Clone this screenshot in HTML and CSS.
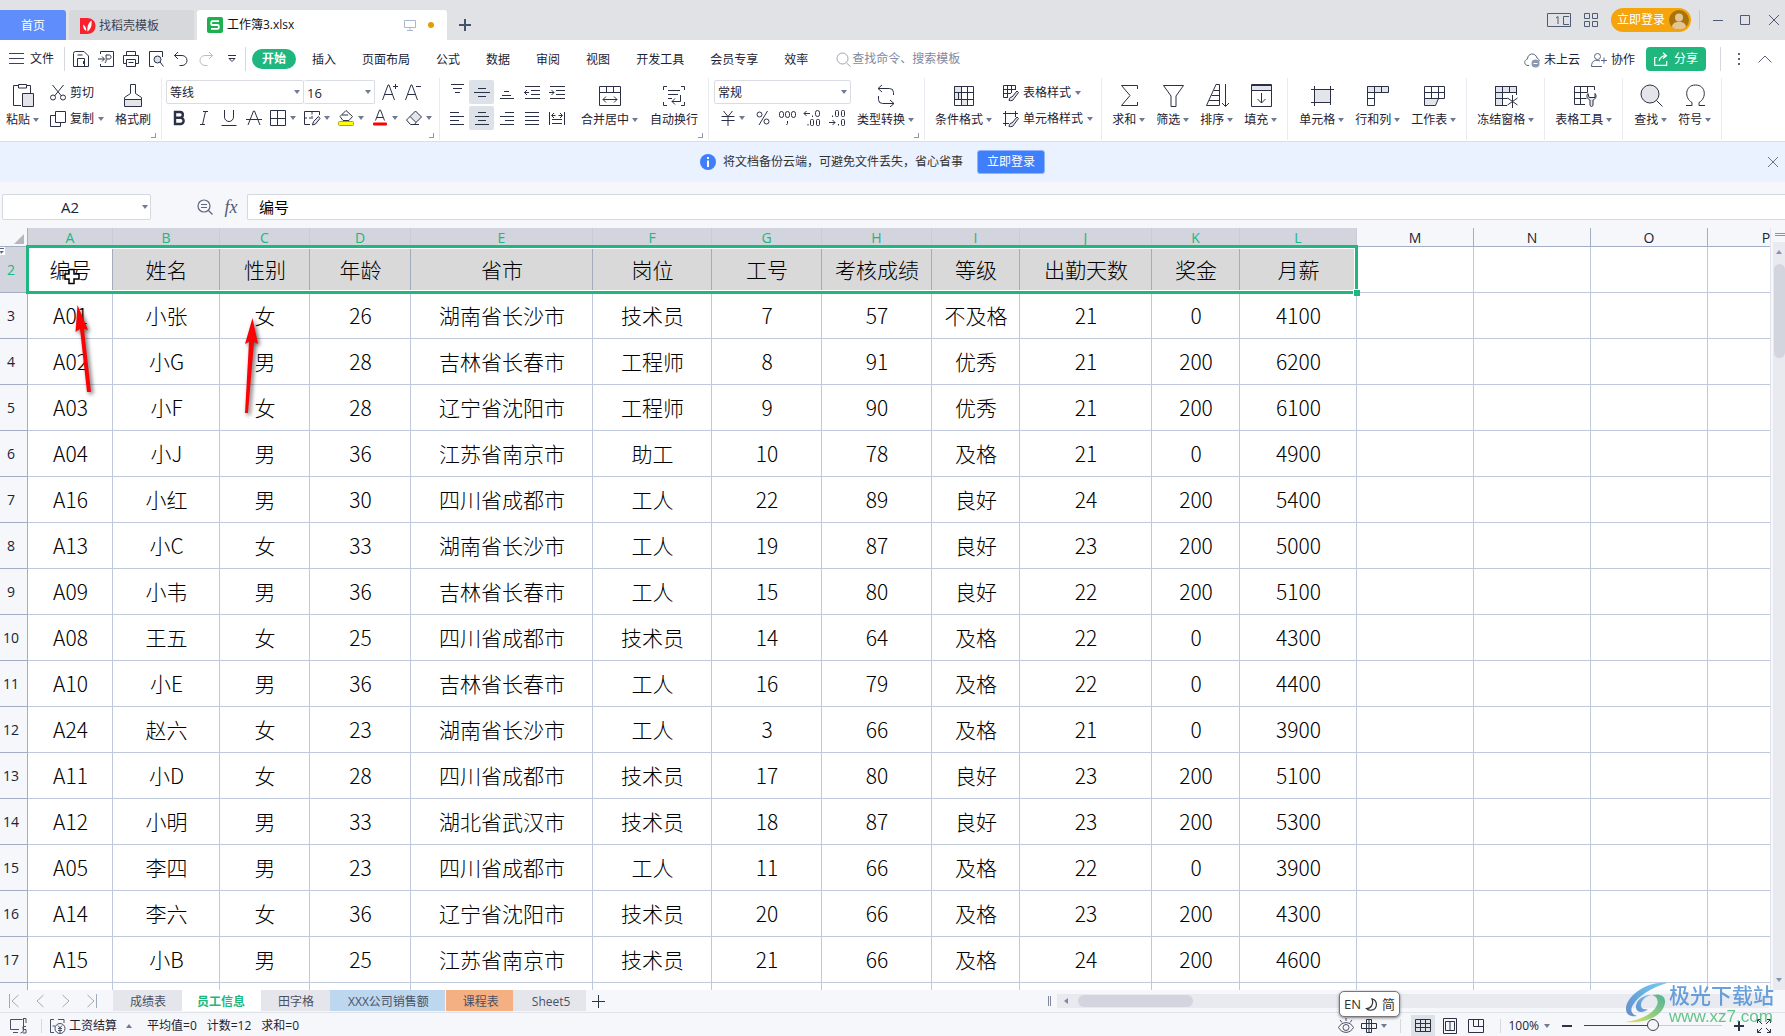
FILE: index.html
```html
<!DOCTYPE html>
<html lang="zh-CN">
<head>
<meta charset="utf-8">
<title>工作簿3.xlsx</title>
<link rel="stylesheet" href="styles.css">
</head>
<body>
<header class="titlebar">
  <button class="tab tab-home">首页</button>
  <button class="tab tab-docer">
    <svg width="16" height="18" viewBox="0 0 16 18"><path d="M0 1h7c5 0 8.500 3 8.500 8s-3.500 8-8.500 8H0z" fill="#f8222f"/><path d="M7.500 14.500C7 10 8 6 11.500 3.500 12 9 11 12 7.500 14.500zM6.300 14C3.500 12.500 3 10 3.200 7.500 5.500 9 6.300 11 6.300 14z" fill="#fff"/></svg>
    <span>找稻壳模板</span>
  </button>
  <button class="tab tab-file">
    <svg width="16" height="18" viewBox="0 0 16 18"><rect y="1" width="16" height="16" rx="2" fill="#1eb04f"/><path d="M12 5.200H5.500a1.300 1.300 0 0 0-1.300 1.300v1.200A1.300 1.300 0 0 0 5.500 9h5a1.300 1.300 0 0 1 1.300 1.300v1.300a1.300 1.300 0 0 1-1.300 1.300H4" fill="none" stroke="#fff" stroke-width="1.800"/></svg>
    <span class="tab-name">工作簿3.xlsx</span>
    <svg width="12" height="12" viewBox="0 0 12 12" fill="none" stroke="#aab6d2"><path d="M.5 1.500h11v7H.5zM6 8.500v2.500M3 11.500h6"/></svg>
    <i class="dot"></i>
  </button>
  <button class="icon-btn new-tab" aria-label="新建"><svg width="12" height="12" viewBox="0 0 12 12" stroke="#45526b" stroke-width="2"><path d="M6 0v12M0 6h12"/></svg></button>
  <div class="window-tools">
    <button class="icon-btn" aria-label="窗口"><svg width="24" height="14" viewBox="0 0 24 14" fill="none" stroke="#4f5b75"><path d="M.5.5h23v13H.5zM9 5l2-1.500V11M22 3.500h-5.500v8H22"/></svg></button>
    <button class="icon-btn" aria-label="应用"><svg width="14" height="14" viewBox="0 0 14 14" fill="none" stroke="#4f5b75"><path d="M.5.500h5v5h-5zM8.500.500h5v5h-5zM.5 8.500h5v5h-5zM8.500 8.500h5v5h-5z"/></svg></button>
    <button class="login-pill">立即登录
      <svg width="20" height="20" viewBox="0 0 20 20"><circle cx="10" cy="10" r="10" fill="#a9730b"/><circle cx="10" cy="7.500" r="4" fill="#e3c592"/><path d="M3 17c0-7 14-7 14 0a10 10 0 0 1-14 0z" fill="#e3c592"/></svg>
    </button>
    <i class="vsep"></i>
    <button class="icon-btn win" aria-label="最小化"><svg width="10" height="10" viewBox="0 0 10 10" stroke="#4f5b75"><path d="M0 5.500h10"/></svg></button>
    <button class="icon-btn win" aria-label="最大化"><svg width="10" height="10" viewBox="0 0 10 10" fill="none" stroke="#4f5b75"><path d="M.5.500h9v9h-9z"/></svg></button>
    <button class="icon-btn win" aria-label="关闭"><svg width="10" height="10" viewBox="0 0 10 10" stroke="#4f5b75"><path d="M0 0l10 10M10 0L0 10"/></svg></button>
  </div>
</header>

<nav class="menubar">
  <button class="file-menu"><svg width="15" height="12" viewBox="0 0 15 12" stroke="#3b4358"><path d="M0 .5h15M0 5.500h15M0 10.500h15"/></svg>文件</button>
  <i class="vsep"></i>
  <div class="quick">
    <button class="icon-btn" aria-label="保存"><svg class="ico" width="16" height="16" viewBox="0 0 16 16"><path d="M.5 2.500a2 2 0 0 1 2-2H11L15.500 5v10.500H.5zM4.500 15V7.500h7V15M4.500 4h5M10.500 10v3"/></svg></button>
    <button class="icon-btn" aria-label="输出为PDF"><svg class="ico" width="16" height="16" viewBox="0 0 16 16"><path d="M2.500 3V.5h13v15h-13V13M0 8h6M4 5.500L6.500 8 4 10.500M7 12c2-2 1-5 1-8h3.500c2 0 2 4 0 4H9"/></svg></button>
    <button class="icon-btn" aria-label="打印"><svg class="ico" width="16" height="16" viewBox="0 0 16 16"><path d="M3.500 4.500v-4h9v4M3.500 12.500h-3v-8h15v8h-3M3.500 8.500h9v7h-9zM5.500 11.500h5"/></svg></button>
    <button class="icon-btn" aria-label="打印预览"><svg class="ico" width="16" height="16" viewBox="0 0 16 16"><path d="M6 15.500H1.500V.5h13V6"/><circle cx="9.500" cy="8.500" r="3.500" fill="#dcdfe8"/><path d="M12 11l3.500 4.500"/></svg></button>
    <button class="icon-btn" aria-label="撤销"><svg class="ico" width="16" height="16" viewBox="0 0 16 16"><path d="M5 1L1.500 4.500 5 8M1.500 4.500H9a5 5 0 0 1 0 10H6.500"/></svg></button>
    <button class="icon-btn" aria-label="恢复" disabled><svg class="ico faint" width="16" height="16" viewBox="0 0 16 16"><path d="M11 1l3.500 3.500L11 8M14.500 4.500H7a5 5 0 0 0 0 10h2.500"/></svg></button>
    <button class="icon-btn more" aria-label="更多"><svg class="ico" width="8" height="8" viewBox="0 0 8 8"><path d="M0 .5h8M1 3.500h6L4 6.500z"/></svg></button>
  </div>
  <i class="vsep"></i>
  <div class="menus">
    <button class="menu active">开始</button>
    <button class="menu">插入</button>
    <button class="menu">页面布局</button>
    <button class="menu">公式</button>
    <button class="menu">数据</button>
    <button class="menu">审阅</button>
    <button class="menu">视图</button>
    <button class="menu">开发工具</button>
    <button class="menu">会员专享</button>
    <button class="menu">效率</button>
  </div>
  <label class="search">
    <svg width="15" height="15" viewBox="0 0 15 15" fill="none" stroke="#9aa3b8"><circle cx="6.500" cy="6.500" r="5.500"/><path d="M10.500 11l4 3.500"/></svg>
    <input type="text" placeholder="查找命令、搜索模板" aria-label="查找命令">
  </label>
  <div class="menu-right">
    <button class="text-btn"><svg width="16" height="16" viewBox="0 0 16 16" fill="none" stroke="#5a6480"><path d="M5 13.500H4C0 13.500-.5 8 3.500 7c0-6 8-7 9.500-1 1.500.500 2.500 2 2 3.500"/><circle cx="11.500" cy="11.500" r="4" fill="#8d97ad" stroke="none"/><path d="M9.500 11.500h4" stroke="#fff"/></svg>未上云</button>
    <button class="text-btn"><svg width="16" height="16" viewBox="0 0 16 16" fill="none" stroke="#5a6480"><circle cx="6.500" cy="4.500" r="3"/><path d="M11 14.500H.5C.5 8 5 7.500 9 9M13 5.500v6M10 8.500h6"/></svg>协作</button>
    <button class="share"><svg width="14" height="14" viewBox="0 0 14 14" fill="none" stroke="#fff" stroke-width="1.200"><path d="M3 5.500H.7v7.800h12V9M9 .7l3.500 3L9 6.500M12.500 3.700C8 3.700 6 5.500 5 9"/></svg>分享</button>
    <i class="vsep"></i>
    <button class="icon-btn" aria-label="更多"><svg width="4" height="14" viewBox="0 0 4 14" fill="#5a6480"><path d="M1 1h2v2H1zM1 6h2v2H1zM1 11h2v2H1z"/></svg></button>
    <button class="icon-btn" aria-label="折叠"><svg width="14" height="8" viewBox="0 0 14 8" fill="none" stroke="#5a6480"><path d="M.5 7.500L7 1l6.500 6.500"/></svg></button>
  </div>
</nav>

<section class="ribbon">
  <div class="group g-clip">
    <button class="big"><svg class="ico" width="24" height="24" viewBox="0 0 24 24"><path d="M7 1.500H2.500v20H10M16 1.500h3.500V9M7.500.500h8v3.500h-8z"/><path d="M11.500 9.500h11v13h-11z" fill="#e3e5ea"/></svg><span>粘贴<i class="caret"></i></span></button>
    <div class="stack">
      <button class="small"><svg class="ico" width="16" height="16" viewBox="0 0 16 16"><path d="M2.500 0l9 11M13.500 0l-9 11"/><circle cx="3" cy="12.500" r="2.500"/><circle cx="13" cy="12.500" r="2.500"/></svg>剪切</button>
      <button class="small"><svg class="ico" width="16" height="16" viewBox="0 0 16 16"><path d="M5.500.500h10v11h-10zM5.500 4.500h-5v11h10v-4"/></svg>复制<i class="caret"></i></button>
    </div>
    <button class="big"><svg class="ico" width="24" height="24" viewBox="0 0 24 24"><path d="M9.500.500h5v9l6 4v2h-17v-2l6-4z"/><path d="M3.500 15.500h17v7h-17z" fill="#e3e5ea"/></svg><span>格式刷</span></button>
    <i class="corner"></i>
  </div>

  <div class="group g-font">
    <div class="stack">
      <div class="row">
        <label class="pick pick-font"><select aria-label="字体"><option>等线</option></select></label>
        <label class="pick pick-size"><select aria-label="字号"><option>16</option></select></label>
        <button class="icon-btn resize" aria-label="增大字号"><svg class="ico" width="16" height="18" viewBox="0 0 16 18"><path d="M.5 17L6 2h1l5.500 15M2.500 11.500h8M11 3.500h5M13.500 1v5"/></svg></button>
        <button class="icon-btn resize" aria-label="减小字号"><svg class="ico" width="16" height="18" viewBox="0 0 16 18"><path d="M.5 17L6 2h1l5.500 15M2.500 11.500h8M11 3.500h5"/></svg></button>
      </div>
      <div class="row">
        <button class="cell-btn" aria-label="加粗"><svg class="ico" width="16" height="16" viewBox="0 0 16 16"><path d="M4 2h5a2.800 2.800 0 0 1 0 5.700H4zM4 7.700h5.500a3.100 3.100 0 0 1 0 6.300H4z" stroke-width="2.400"/></svg></button>
        <button class="cell-btn" aria-label="倾斜"><svg class="ico" width="16" height="16" viewBox="0 0 16 16"><path d="M7 1.500h5M4 14.500h5M9.500 1.500l-3 13"/></svg></button>
        <button class="cell-btn" aria-label="下划线"><svg class="ico" width="16" height="16" viewBox="0 0 16 16"><path d="M3.500 0v7a4.500 4.500 0 0 0 9 0V0M.5 15.500h15"/></svg></button>
        <button class="cell-btn" aria-label="删除线"><svg class="ico" width="16" height="16" viewBox="0 0 16 16"><path d="M2 15L7.500 1h1L14 15M0 9.500h16"/></svg></button>
        <button class="split first" aria-label="边框"><svg class="ico" width="16" height="16" viewBox="0 0 16 16"><path d="M.5.500h15v15H.5zM7.500 0v16M0 8.500h16"/></svg><i class="caret"></i></button>
        <button class="split" aria-label="绘图边框"><svg class="ico" width="16" height="16" viewBox="0 0 16 16"><path d="M6 14.500H.5v-13h15V5M.5 8H3M5 8h2M8 1.500v3M8 6v3"/><path d="M8.500 15l1-3.500 5-5 1.500 2-4.500 5.500z" fill="#e3e5ea"/></svg><i class="caret"></i></button>
        <button class="split" aria-label="填充颜色"><svg class="ico" width="16" height="16" viewBox="0 0 16 16"><path d="M2 6.500l6-6 6.500 6-3.500 4H5zM4 5h6"/><rect x=".5" y="11.500" width="15" height="4" rx="1" fill="#ffff00" stroke="#a6a32c"/></svg><i class="caret"></i></button>
        <button class="split" aria-label="字体颜色"><svg class="ico" width="16" height="16" viewBox="0 0 16 16"><path d="M3.500 10.500L7.500 0h1l4 10.500M5 7.500h6"/><rect x="1" y="12.500" width="14" height="3" rx="1" fill="#f00" stroke="none"/></svg><i class="caret"></i></button>
        <button class="split last" aria-label="清除"><svg class="ico" width="16" height="16" viewBox="0 0 16 16"><path d="M4 6.500l5.500-5.500 6 6-5.500 5.500z" fill="#e3e5ea"/><path d="M4 6.500L.5 10l4 4.500h4l1.500-2M7 14.500h6"/></svg><i class="caret"></i></button>
      </div>
    </div>
    <i class="corner"></i>
  </div>

  <div class="group g-align">
    <div class="stack">
      <div class="row">
        <button class="cell-btn" aria-label="顶端对齐"><svg class="ico" width="16" height="16" viewBox="0 0 16 16"><path d="M2 .5h13M4 4.500h9M6 8.500h5"/></svg></button>
        <button class="cell-btn on" aria-label="垂直居中"><svg class="ico" width="16" height="16" viewBox="0 0 16 16"><path d="M4 4.500h8M0 8.500h16M4 12.500h8"/></svg></button>
        <button class="cell-btn" aria-label="底端对齐"><svg class="ico" width="16" height="16" viewBox="0 0 16 16"><path d="M5 7.500h5M3 11.500h9M1 14.500h14"/></svg></button>
        <button class="cell-btn" aria-label="减少缩进"><svg class="ico" width="16" height="16" viewBox="0 0 16 16"><path d="M1 2.500h15M7 6.500h9M7 10.500h9M1 14.500h15M0 8.500h5M3 6L.5 8.500 3 11"/></svg></button>
        <button class="cell-btn" aria-label="增加缩进"><svg class="ico" width="16" height="16" viewBox="0 0 16 16"><path d="M1 2.500h15M7 6.500h9M7 10.500h9M1 14.500h15M0 8.500h5M2.500 6L5 8.500 2.500 11"/></svg></button>
      </div>
      <div class="row">
        <button class="cell-btn" aria-label="左对齐"><svg class="ico" width="16" height="16" viewBox="0 0 16 16"><path d="M1 2.500h9M1 6.500h14M1 10.500h9M1 14.500h14"/></svg></button>
        <button class="cell-btn on" aria-label="水平居中"><svg class="ico" width="16" height="16" viewBox="0 0 16 16"><path d="M4 2.500h8M1 6.500h14M4 10.500h8M1 14.500h14"/></svg></button>
        <button class="cell-btn" aria-label="右对齐"><svg class="ico" width="16" height="16" viewBox="0 0 16 16"><path d="M6 2.500h9M1 6.500h14M6 10.500h9M1 14.500h14"/></svg></button>
        <button class="cell-btn" aria-label="两端对齐"><svg class="ico" width="16" height="16" viewBox="0 0 16 16"><path d="M1 2.500h14M1 6.500h14M1 10.500h14M1 14.500h14"/></svg></button>
        <button class="cell-btn" aria-label="分散对齐"><svg class="ico" width="16" height="16" viewBox="0 0 16 16"><path d="M.5 2v13M15.500 2v13M3 9.500h10M3 13.500h10M3 5.500h3.500M9.500 5.500H13M5 3L2.500 5.500 5 8M11 3l2.500 2.500L11 8"/></svg></button>
      </div>
    </div>
    <button class="big"><svg class="ico" width="24" height="24" viewBox="0 0 24 24"><path d="M1.500 2.500h21v19h-21zM1.500 8.500h21M8.500 2.500v6M15.500 2.500v6M5 15.500h14M8 12.500l-3 3 3 3M16 12.500l3 3-3 3"/></svg><span>合并居中<i class="caret"></i></span></button>
    <button class="big"><svg class="ico" width="24" height="24" viewBox="0 0 24 24"><path d="M5 2.500H1.500V6M19 2.500h3.500V6M5 21.500H1.500V18M19 21.500h3.500V18M6 6.500h12M6 10.500h10M6 14.500h4M18.500 11v6.500H10M13 14.500l-3 3 3 3"/></svg><span>自动换行</span></button>
    <i class="corner"></i>
  </div>

  <div class="group g-number">
    <div class="stack">
      <div class="row"><label class="pick pick-format"><select aria-label="数字格式"><option>常规</option></select></label></div>
      <div class="row">
        <button class="split yen" aria-label="货币"><svg class="ico" width="14" height="16" viewBox="0 0 14 16"><path d="M2.500 1L7 6.500 11.500 1M.5 6.500h13M.5 10.500h13M7 6.500V16"/></svg><i class="caret"></i></button>
        <button class="cell-btn" aria-label="百分比"><svg class="ico" width="14" height="14" viewBox="0 0 14 14"><circle cx="3.500" cy="3.500" r="2.500"/><circle cx="10.500" cy="10.500" r="2.500"/><path d="M11.500 0L3 14"/></svg></button>
        <button class="cell-btn" aria-label="千位分隔"><svg class="ico" width="17" height="16" viewBox="0 0 17 16"><rect x=".5" y="1.500" width="4" height="6" rx="2"/><rect x="6.500" y="1.500" width="4" height="6" rx="2"/><rect x="12.500" y="1.500" width="4" height="6" rx="2"/><path d="M8.500 11v2.500l-1 1.500"/></svg></button>
        <button class="cell-btn" aria-label="增加小数"><svg class="ico" width="17" height="16" viewBox="0 0 17 16"><path d="M0 3.500h6M2.500 1L0 3.500 2.500 6M8.500 5.500v1.500M4 14v1.500"/><rect x="11.500" y=".5" width="4" height="6" rx="2"/><rect x="6.500" y="9.500" width="3" height="6" rx="1"/><rect x="12.500" y="9.500" width="3" height="6" rx="1"/></svg></button>
        <button class="cell-btn" aria-label="减少小数"><svg class="ico" width="17" height="16" viewBox="0 0 17 16"><path d="M0 12.500h6M3.500 10L6 12.500 3.500 15M9.500 14v1.500M3.500 5.500V7"/><rect x="6.500" y=".5" width="3" height="6" rx="1"/><rect x="12.500" y=".5" width="3" height="6" rx="1"/><rect x="12.500" y="9.500" width="3" height="6" rx="1"/></svg></button>
      </div>
    </div>
    <button class="big"><svg class="ico" width="24" height="24" viewBox="0 0 24 24"><path d="M8 1L4 4.500 8 8M4 4.500h11.500q4 0 4 4V11M16 16l4 3.500-4 3.500M20 19.500H8.500q-4 0-4-4V12"/></svg><span>类型转换<i class="caret"></i></span></button>
    <i class="corner"></i>
  </div>

  <div class="group g-style">
    <button class="big"><svg class="ico" width="24" height="24" viewBox="0 0 24 24"><path d="M2.500 2.500h7v6h-7zM2.500 8.500h7v7h-7zM9.500 15.500h6v6h-6z" fill="#e3e5ea"/><path d="M2.500 2.500h19v19h-19zM2.500 8.500h19M2.500 15.500h19M9.500 2.500v6M15.500 2.500v6M6.500 8.500v7M15.500 8.500v13M9.500 15.500v6"/></svg><span>条件格式<i class="caret"></i></span></button>
    <div class="stack">
      <button class="small"><svg class="ico" width="16" height="18" viewBox="0 0 16 18"><path d="M5 13.500H.5v-12h12V6M.5 5.500h12M.5 9.500H8M4.500 1.500v12M8.500 1.500V9"/><path d="M6 16.500c.5-3 1.500-3.500 3-3.500l5-6 1.500 1.500-4.500 6c-.5 2-3 2.500-5 2z" fill="#e3e5ea"/></svg>表格样式<i class="caret"></i></button>
      <button class="small"><svg class="ico" width="16" height="18" viewBox="0 0 16 18"><path d="M0 3.500h15M2.500 1v15M0 13.500h6M12.500 1v6"/><path d="M6 16.500c.5-3 1.500-3.500 3-3.500l5-6 1.500 1.500-4.500 6c-.5 2-3 2.500-5 2z" fill="#e3e5ea"/></svg>单元格样式<i class="caret"></i></button>
    </div>
  </div>

  <div class="group">
    <button class="big"><svg class="ico" width="24" height="24" viewBox="0 0 24 24"><path d="M20.500 5V1.500h-16L13 11.500l-8.500 10h16V18"/></svg><span>求和<i class="caret"></i></span></button>
    <button class="big"><svg class="ico" width="24" height="24" viewBox="0 0 24 24"><path d="M2.500 1.500h20L15 12v10.500h-5V12z"/></svg><span>筛选<i class="caret"></i></span></button>
    <button class="big"><svg class="ico" width="24" height="24" viewBox="0 0 24 24"><path d="M14.500 21.500h-13L11 .5h3.500zM9 6.500h5.500M6.500 11.500h8M4 16.500h10.500M20.500 0v22M17 19l3.500 3.500L24 19"/></svg><span>排序<i class="caret"></i></span></button>
    <button class="big"><svg class="ico" width="24" height="24" viewBox="0 0 24 24"><path d="M2.500 1.500h20v5h-20z" fill="#e3e5ea"/><path d="M2.500.500h20v22h-20zM12.500 9v10M8.500 15l4 4 4-4"/></svg><span>填充<i class="caret"></i></span></button>
  </div>

  <div class="group g-cells">
    <button class="big"><svg class="ico" width="24" height="24" viewBox="0 0 24 24"><path d="M4.500 5.500h16v13h-16z" fill="#e3e5ea"/><path d="M1 5.500h23M1 18.500h18M4.500 2v20M20.500 2v15M20.500 18v3"/></svg><span>单元格<i class="caret"></i></span></button>
    <button class="big"><svg class="ico" width="24" height="24" viewBox="0 0 24 24"><path d="M1.500 2.500h21v6h-21z" fill="#e3e5ea"/><path d="M8.500 2.500v19h-7v-19M15.500 2.500v6M1.500 8.500h7M1.500 14.500h7"/></svg><span>行和列<i class="caret"></i></span></button>
    <button class="big"><svg class="ico" width="24" height="24" viewBox="0 0 24 24"><path d="M2.500 14.500h14l-3 7h-11z" fill="#e3e5ea"/><path d="M2.500 2.500h20v12h-20zM2.500 8.500h20M9.500 2.500v12M16.500 2.500v12"/></svg><span>工作表<i class="caret"></i></span></button>
  </div>

  <div class="group">
    <button class="big"><svg class="ico" width="24" height="24" viewBox="0 0 24 24"><path d="M1.500 2.500h21v6h-14v13h-7z" fill="#e3e5ea"/><path d="M13 21.500H1.500v-19h21V11M1.500 8.500h21M1.500 14.500h12M8.500 2.500v19M15.500 2.500v6M18.500 11v13M13.500 14l10 7M23.500 14l-10 7"/></svg><span>冻结窗格<i class="caret"></i></span></button>
  </div>

  <div class="group">
    <button class="big"><svg class="ico" width="24" height="24" viewBox="0 0 24 24"><path d="M13 20.500H2.500v-18h20V6M2.500 8.500h13M2.500 14.500h12M8.500 2.500v18M15.500 2.500v6"/><path d="M16 9.500c-2.500 3 0 6 2 6.500v5.500q1.500 2 3 0V16c2-.500 4.500-3.500 2-6.500v4h-6z" fill="#e3e5ea"/></svg><span>表格工具<i class="caret"></i></span></button>
  </div>

  <div class="group g-find">
    <button class="big"><svg class="ico" width="24" height="24" viewBox="0 0 24 24"><circle cx="11" cy="10" r="9" fill="#e3e5ea"/><path d="M17.500 16.500l6 6"/></svg><span>查找<i class="caret"></i></span></button>
    <button class="big"><svg class="ico" width="24" height="24" viewBox="0 0 24 24"><path d="M3 21.500h6v-3C1 14 2 1 12.500 1S24 14 16 18.500v3h6"/></svg><span>符号<i class="caret"></i></span></button>
  </div>
</section>

<aside class="notice">
  <p><svg width="16" height="16" viewBox="0 0 16 16"><circle cx="8" cy="8" r="8" fill="#3f7ffb"/><path d="M7 3h2v2H7zM7 6.500h2V13H7z" fill="#fff"/></svg>将文档备份云端，可避免文件丢失，省心省事 <button class="notice-login">立即登录</button></p>
  <button class="icon-btn" aria-label="关闭提示"><svg width="12" height="12" viewBox="0 0 12 12" stroke="#6c7485"><path d="M1 1l10 10M11 1L1 11"/></svg></button>
</aside>

<section class="formula">
  <label class="namebox"><input type="text" value="A2" aria-label="名称框"><i class="caret"></i></label>
  <button class="icon-btn lens" aria-label="浏览公式"><svg width="16" height="16" viewBox="0 0 16 16" fill="none" stroke="#5a6480" stroke-width="1.200"><circle cx="7" cy="7" r="6"/><path d="M11.500 11.500l4 4M4 5.500h6M4 8.500h6"/></svg></button>
  <button class="icon-btn fx">fx</button>
  <input class="formula-input" type="text" value="编号" aria-label="编辑栏">
</section>

<main class="sheet">
  <div class="canvas">
    <table>
      <colgroup><col class="c-head"><col class="c-a"><col class="c-b"><col class="c-c"><col class="c-d"><col class="c-e"><col class="c-f"><col class="c-g"><col class="c-g"><col class="c-i"><col class="c-j"><col class="c-i"><col class="c-m"><col class="c-m"><col class="c-m"><col class="c-m"><col class="c-m"></colgroup>
      <thead><tr class="letters"><th><i class="all"></i></th><th class="sel">A</th><th class="sel">B</th><th class="sel">C</th><th class="sel">D</th><th class="sel">E</th><th class="sel">F</th><th class="sel">G</th><th class="sel">H</th><th class="sel">I</th><th class="sel">J</th><th class="sel">K</th><th class="sel">L</th><th>M</th><th>N</th><th>O</th><th>P</th></tr></thead>
      <tbody>
      <tr class="picked"><th>2</th><td class="cursor-cell">编号</td><td>姓名</td><td>性别</td><td>年龄</td><td>省市</td><td>岗位</td><td>工号</td><td>考核成绩</td><td>等级</td><td>出勤天数</td><td>奖金</td><td>月薪</td><td></td><td></td><td></td><td></td></tr>
      <tr><th>3</th><td>A01</td><td>小张</td><td>女</td><td>26</td><td>湖南省长沙市</td><td>技术员</td><td>7</td><td>57</td><td>不及格</td><td>21</td><td>0</td><td>4100</td><td></td><td></td><td></td><td></td></tr>
      <tr><th>4</th><td>A02</td><td>小G</td><td>男</td><td>28</td><td>吉林省长春市</td><td>工程师</td><td>8</td><td>91</td><td>优秀</td><td>21</td><td>200</td><td>6200</td><td></td><td></td><td></td><td></td></tr>
      <tr><th>5</th><td>A03</td><td>小F</td><td>女</td><td>28</td><td>辽宁省沈阳市</td><td>工程师</td><td>9</td><td>90</td><td>优秀</td><td>21</td><td>200</td><td>6100</td><td></td><td></td><td></td><td></td></tr>
      <tr><th>6</th><td>A04</td><td>小J</td><td>男</td><td>36</td><td>江苏省南京市</td><td>助工</td><td>10</td><td>78</td><td>及格</td><td>21</td><td>0</td><td>4900</td><td></td><td></td><td></td><td></td></tr>
      <tr><th>7</th><td>A16</td><td>小红</td><td>男</td><td>30</td><td>四川省成都市</td><td>工人</td><td>22</td><td>89</td><td>良好</td><td>24</td><td>200</td><td>5400</td><td></td><td></td><td></td><td></td></tr>
      <tr><th>8</th><td>A13</td><td>小C</td><td>女</td><td>33</td><td>湖南省长沙市</td><td>工人</td><td>19</td><td>87</td><td>良好</td><td>23</td><td>200</td><td>5000</td><td></td><td></td><td></td><td></td></tr>
      <tr><th>9</th><td>A09</td><td>小韦</td><td>男</td><td>36</td><td>吉林省长春市</td><td>工人</td><td>15</td><td>80</td><td>良好</td><td>22</td><td>200</td><td>5100</td><td></td><td></td><td></td><td></td></tr>
      <tr><th>10</th><td>A08</td><td>王五</td><td>女</td><td>25</td><td>四川省成都市</td><td>技术员</td><td>14</td><td>64</td><td>及格</td><td>22</td><td>0</td><td>4300</td><td></td><td></td><td></td><td></td></tr>
      <tr><th>11</th><td>A10</td><td>小E</td><td>男</td><td>36</td><td>吉林省长春市</td><td>工人</td><td>16</td><td>79</td><td>及格</td><td>22</td><td>0</td><td>4400</td><td></td><td></td><td></td><td></td></tr>
      <tr><th>12</th><td>A24</td><td>赵六</td><td>女</td><td>23</td><td>湖南省长沙市</td><td>工人</td><td>3</td><td>66</td><td>及格</td><td>21</td><td>0</td><td>3900</td><td></td><td></td><td></td><td></td></tr>
      <tr><th>13</th><td>A11</td><td>小D</td><td>女</td><td>28</td><td>四川省成都市</td><td>技术员</td><td>17</td><td>80</td><td>良好</td><td>23</td><td>200</td><td>5100</td><td></td><td></td><td></td><td></td></tr>
      <tr><th>14</th><td>A12</td><td>小明</td><td>男</td><td>33</td><td>湖北省武汉市</td><td>技术员</td><td>18</td><td>87</td><td>良好</td><td>23</td><td>200</td><td>5300</td><td></td><td></td><td></td><td></td></tr>
      <tr><th>15</th><td>A05</td><td>李四</td><td>男</td><td>23</td><td>四川省成都市</td><td>工人</td><td>11</td><td>66</td><td>及格</td><td>22</td><td>0</td><td>3900</td><td></td><td></td><td></td><td></td></tr>
      <tr><th>16</th><td>A14</td><td>李六</td><td>女</td><td>36</td><td>辽宁省沈阳市</td><td>技术员</td><td>20</td><td>66</td><td>及格</td><td>23</td><td>200</td><td>4300</td><td></td><td></td><td></td><td></td></tr>
      <tr><th>17</th><td>A15</td><td>小B</td><td>男</td><td>25</td><td>江苏省南京市</td><td>技术员</td><td>21</td><td>66</td><td>及格</td><td>24</td><td>200</td><td>4600</td><td></td><td></td><td></td><td></td></tr>
      <tr><th></th><td></td><td></td><td></td><td></td><td></td><td></td><td></td><td></td><td></td><td></td><td></td><td></td><td></td><td></td><td></td><td></td></tr>
      </tbody>
    </table>
    <div class="selection"><i class="handle"></i></div>
    <svg class="hidden-row" width="5" height="8" viewBox="0 0 5 8"><path d="M0 0h5v8H0z" fill="#fff"/><path d="M0 1.500h4" stroke="#5a6480"/><path d="M0 4h4L1 7z" fill="#5a6480"/></svg>
    <svg class="marks" width="300" height="200" viewBox="0 0 300 200">
      <path d="M69 41.500h5v4.500h5v5h-5v4.500h-5V51h-4v-5h4z" fill="#fff" stroke="#000" stroke-width="1.500"/>
      <g class="arrows" fill="#fb0207">
        <path d="M77.500 77L88 102l-4-1 7 63h-4l-7-63-4.500 3z"/>
        <path d="M252.500 90L258 116l-4-2-6 71h-3l4-71-4 2z"/>
      </g>
    </svg>
  </div>
  <div class="vscroll">
    <i class="split-grip"></i>
    <div class="vtrack"><i class="up"></i><i class="vthumb"></i><i class="down"></i></div>
  </div>
</main>

<footer class="sheetbar">
  <div class="sheet-nav">
    <button class="icon-btn" aria-label="首张"><svg width="10" height="14" viewBox="0 0 10 14"><path d="M.5 0v14M9.500 1L3 7l6.500 6"/></svg></button>
    <button class="icon-btn" aria-label="上一张"><svg width="10" height="14" viewBox="0 0 10 14"><path d="M8.500 1L2 7l6.500 6"/></svg></button>
    <button class="icon-btn" aria-label="下一张"><svg width="10" height="14" viewBox="0 0 10 14"><path d="M1.500 1L8 7l-6.500 6"/></svg></button>
    <button class="icon-btn" aria-label="末张"><svg width="10" height="14" viewBox="0 0 10 14"><path d="M9.500 0v14M.5 1L7 7 .5 13"/></svg></button>
  </div>
  <button class="sheet-tab">成绩表</button>
  <button class="sheet-tab current">员工信息</button>
  <button class="sheet-tab">田字格</button>
  <button class="sheet-tab blue">XXX公司销售额</button>
  <button class="sheet-tab orange">课程表</button>
  <button class="sheet-tab plain">Sheet5</button>
  <button class="icon-btn add-sheet" aria-label="新建工作表"><svg width="13" height="13" viewBox="0 0 13 13" stroke="#2b3348"><path d="M6.500 0v13M0 6.500h13"/></svg></button>
  <div class="hscroll"><i class="grip"></i><div class="htrack"><i class="left"></i><i class="hthumb"></i></div></div>
</footer>

<footer class="status">
  <button class="icon-btn macro" aria-label="宏"><svg class="ico soft" width="17" height="17" viewBox="0 0 17 17"><path d="M9 12.500H.5v-10h12M3 15.500h5M13.500 1v12q0 3-3 3M16 9.500h-3v3h3v3.500h-3M14 1.500h2V6"/></svg></button>
  <i class="vsep"></i>
  <button class="payroll"><svg class="ico soft" width="16" height="16" viewBox="0 0 16 16"><path d="M4 14.500H.5V1.500H4M8 1.500h6V5M2.500 8H5"/><circle cx="10" cy="10.500" r="5"/><path d="M8 7.500l2 2.500 2-2.500M8 10.500h4M8 12.500h4M10 10v5"/></svg>工资结算<i class="caret-up"></i></button>
  <output>平均值=0</output><output>计数=12</output><output>求和=0</output>
  <div class="status-right">
    <button class="icon-btn" aria-label="护眼模式"><svg class="ico soft" width="16" height="16" viewBox="0 0 16 16"><path d="M.5 9.500C4 3 12 3 15.500 9.500 12 16 4 16 .5 9.500zM8 0v3M2 2l2 2.500M14 2l-2 2.500"/><circle cx="8" cy="9.500" r="3"/></svg></button>
    <button class="split" aria-label="阅读模式"><svg class="ico" width="16" height="14" viewBox="0 0 16 14"><path d="M5.500.500h5v13h-5zM.5 4.500h15v5H.5zM8 0v14"/></svg><i class="caret"></i></button>
    <i class="vsep"></i>
    <button class="view on" aria-label="普通视图"><svg class="ico" width="16" height="14" viewBox="0 0 16 14"><path d="M.5.500h15v12H.5zM.5 4.500h15M.5 8.500h15M5.500.500v12M10.500.500v12"/></svg></button>
    <button class="view" aria-label="页面布局"><svg class="ico" width="16" height="16" viewBox="0 0 16 16"><path d="M1.500.500h13v15h-13zM3.500 3.500h9v9h-9zM8 3.500v9"/></svg></button>
    <button class="view" aria-label="分页预览"><svg class="ico" width="16" height="14" viewBox="0 0 16 14"><path d="M.5.500h15v13H.5zM5.500.500v7M10.500.500v7M5.500 7.500h10"/></svg></button>
    <i class="vsep"></i>
    <button class="zoom-level">100%<i class="caret"></i></button>
    <button class="icon-btn" aria-label="缩小"><svg width="10" height="10" viewBox="0 0 10 10" stroke="#2b3348" stroke-width="2"><path d="M0 5h10"/></svg></button>
    <input class="zoom" type="range" min="0" max="100" value="50" aria-label="缩放">
    <button class="icon-btn" aria-label="放大"><svg width="10" height="10" viewBox="0 0 10 10" stroke="#2b3348" stroke-width="2"><path d="M0 5h10M5 0v10"/></svg></button>
    <button class="icon-btn" aria-label="全屏"><svg class="ico" width="14" height="14" viewBox="0 0 14 14"><path d="M.5 4V.5H4M.5.500L5 5M10 .5h3.500V4M13.500.500L9 5M.5 10v3.500H4M.5 13.500L5 9M13.500 10v3.500H10M13.500 13.500L9 9"/></svg></button>
  </div>
</footer>

<div class="ime">EN <svg width="13" height="13" viewBox="0 0 13 13" fill="none" stroke="#333" stroke-width="1.200"><path d="M7 .8c6 2 6 10.500-1 11.400-2 .200-3.500-.700-4.500-1.700C6 10.500 9 6 7 .8z"/></svg> 简</div>

<div class="watermark">
  <svg width="44" height="42" viewBox="0 0 44 42">
    <defs><linearGradient id="wa" x1="0" y1="1" x2="1" y2="0"><stop offset="0" stop-color="#4a7cc7"/><stop offset="1" stop-color="#5cc3ee"/></linearGradient><linearGradient id="wb" x1="0" y1="1" x2="1" y2="0"><stop offset="0" stop-color="#e8e04a"/><stop offset=".5" stop-color="#7cc66a"/><stop offset="1" stop-color="#3aa98d"/></linearGradient></defs>
    <path d="M42 1C22-1 1 14 1 27c0 6 5 8 11 7-6-2-7-6-4-11C13 14 26 6 42 1z" fill="url(#wa)"/>
    <path d="M27 13c-9-1-17 6-16 13 1 5 8 5 12 1-4 1-7 0-7-4 0-5 5-9 11-10z" fill="url(#wa)"/>
    <path d="M27 13c8-2 14 1 13 8-2 13-20 21-40 19 16-2 28-8 32-17 2-5-1-9-5-10z" fill="url(#wb)"/>
  </svg>
  <p><b>极光下载站</b><span>www.xz7.com</span></p>
</div>
</body>
</html>
```
FILE: styles.css
```css
* { box-sizing: border-box; }

body {
  margin: 0;
  height: 100vh;
  display: flex;
  flex-direction: column;
  position: relative;
  overflow: hidden;
  background: #f5f7fa;
  color: #1d2233;
  font: 12px/16px "Open Sans", "Noto Sans CJK SC", sans-serif;
}

button, input, select {
  margin: 0;
  padding: 0;
  border: 0;
  background: none;
  color: inherit;
  font: inherit;
}
button { white-space: nowrap; flex: none; }
svg { display: block; flex: none; }
i { font-style: normal; flex: none; }
p { margin: 0; }
.ico { fill: none; stroke: #2b3045; stroke-width: 1; overflow: visible; }
.ico.faint { stroke: #b9bdc8; }
.ico.soft { stroke: #4a5166; }
.icon-btn { display: flex; align-items: center; justify-content: center; }
.vsep { width: 1px; height: 24px; background: #d5d8df; }
.caret {
  display: inline-block;
  border: 3px solid transparent;
  border-top: 4px solid #6f7a94;
  border-bottom: 0;
}

/* title bar */
.titlebar { display: flex; align-items: flex-end; height: 40px; background: #e1e2e6; flex: none; }
.tab { display: flex; align-items: center; height: 30px; padding-top: 1px; border-radius: 3px 3px 0 0; color: #3d4354; }
.tab-home { width: 66px; justify-content: center; background: #5f8dfb; color: #fff; border-radius: 0 3px 0 0; }
.tab-docer { width: 125px; margin-left: 3px; padding-left: 11px; gap: 3px; background: #d7d8dc; }
.tab-file { width: 250px; margin-left: 3px; padding: 0 13px 0 10px; gap: 4px; background: #fff; color: #111; }
.tab-name { margin-right: auto; }
.dot { width: 6px; height: 6px; margin-left: 8px; border-radius: 50%; background: #e69a0b; }
.new-tab { width: 36px; height: 30px; }
.window-tools { display: flex; align-items: center; align-self: flex-start; height: 40px; margin-left: auto; padding: 0 6px 0 0; gap: 13px; }
.login-pill { display: flex; align-items: center; gap: 4px; height: 24px; padding: 0 2px 0 6px; border-radius: 12px; background: #f5a40b; color: #fff; }
.window-tools .vsep { margin-left: -5px; height: 20px; background: #c5c8d0; }
.win { width: 10px; margin-right: 4px; }
.win:last-child { margin: 0 0 0 2px; }

/* menu bar */
.menubar { display: flex; align-items: center; height: 38px; background: #fff; flex: none; }
.file-menu { display: flex; align-items: center; gap: 6px; padding: 0 10px 0 9px; }
.quick { display: flex; align-items: center; gap: 9px; padding: 0 9px 0 8px; }
.quick .more { margin-left: 5px; }
.menus { display: flex; align-items: center; gap: 26px; padding-left: 6px; }
.menu { padding-top: 1px; }
.menu.active { padding: 2px 10px; margin-right: -10px; border-radius: 10px; background: #20b77f; color: #fff; font-weight: 700; }
.search { display: flex; align-items: center; gap: 1px; margin-left: 28px; }
.search input { width: 120px; }
.search input::placeholder { color: #7f89a0; opacity: 1; }
.menu-right { display: flex; align-items: center; gap: 11px; margin-left: auto; padding-right: 13px; }
.text-btn { display: flex; align-items: center; gap: 4px; padding-top: 1px; }
.share { display: flex; align-items: center; justify-content: center; gap: 6px; width: 60px; height: 24px; border-radius: 4px; background: #20b77f; color: #fff; }
.menu-right .vsep { margin: 0 5px 0 3px; }
.menu-right .vsep ~ .icon-btn + .icon-btn { margin-left: 6px; }

/* ribbon */
.ribbon { display: flex; height: 64px; background: #fff; border-bottom: 1px solid #d9deea; flex: none; overflow: hidden; }
.group { position: relative; display: flex; gap: 11px; height: 62px; padding: 0 10px; border-right: 1px solid #e9ebf0; flex: none; }
.big { display: flex; flex-direction: column; align-items: center; align-self: flex-start; gap: 3px; padding-top: 6px; line-height: 18px; }
.big span { display: flex; align-items: center; gap: 3px; }
.stack { display: flex; flex-direction: column; gap: 2px; padding-top: 2px; }
.row { display: flex; align-items: center; height: 24px; }
.small { display: flex; align-items: center; gap: 4px; height: 24px; padding-top: 2px; }
.corner { position: absolute; right: 5px; bottom: 2px; width: 5px; height: 5px; border: solid #8d97ad; border-width: 0 1px 1px 0; }
.g-clip { padding-left: 6px; }
.g-font { padding: 0 7px 0 4px; }
.g-align { padding-left: 4px; gap: 12px; }
.g-number { padding-left: 5px; gap: 6px; }
.g-style { padding-right: 8px; }
.g-cells { padding-left: 11px; }
.g-find { padding-left: 11px; }
.cell-btn { display: flex; align-items: center; justify-content: center; width: 25px; height: 24px; }
.cell-btn.on { background: #dde1e8; border-radius: 2px; }
.split { display: flex; align-items: center; gap: 4px; width: 34px; height: 24px; }
.split.first { margin-left: 4px; }
.split.last { width: 26px; }
.yen { width: 29px; margin-left: 7px; }
.pick { position: relative; display: block; height: 24px; border: 1px solid #d9dce3; border-radius: 2px; }
.pick::after { content: ""; position: absolute; right: 3px; top: 9px; border: 3px solid transparent; border-top: 4px solid #6f7a94; border-bottom: 0; }
.pick select { display: block; width: 100%; height: 22px; padding: 1px 3px 0; appearance: none; }
.pick-font { width: 138px; }
.pick-size { width: 71px; border-left: 0; }
.pick-size select { font-size: 13px; }
.pick-format { width: 137px; }
.resize { margin-left: 7px; }

/* cloud backup notice */
.notice { display: flex; align-items: center; height: 40px; padding-right: 6px; background: #eaf1ff; flex: none; }
.notice p { display: flex; align-items: center; justify-content: center; flex: 1; gap: 7px; padding-right: 22px; color: #333; }
.notice-login { width: 68px; height: 24px; margin-left: 7px; border: 1px solid #8fb3fd; border-radius: 3px; background: #3f7ffb; color: #fff; }

/* formula bar */
.formula { display: flex; align-items: center; height: 46px; padding: 12px 0 8px 2px; flex: none; }
.namebox { position: relative; display: block; width: 149px; height: 26px; }
.namebox input { width: 100%; height: 26px; padding-right: 13px; border: 1px solid #d5d8df; border-radius: 2px; background: #fff; text-align: center; font-size: 15px; }
.namebox .caret { position: absolute; right: 3px; top: 11px; }
.lens { margin-left: 46px; }
.fx { width: 16px; margin: 0 8px 0 10px; color: #4f5b75; font: italic 18px/22px "Liberation Serif", serif; }
.formula-input { flex: 1; min-width: 0; height: 26px; padding: 0 0 2px 11px; border: 1px solid #d5d8df; border-right: 0; border-radius: 2px 0 0 2px; background: #fff; color: #000; font-size: 15px; }

/* worksheet */
.sheet { display: flex; flex: 1; min-height: 0; }
.canvas { position: relative; flex: 1; min-width: 0; overflow: hidden; background: #fff; border-right: 1px solid #e1e4ec; }
table { width: 1825px; table-layout: fixed; border-collapse: separate; border-spacing: 0; }
.c-head { width: 28px; }
.c-a { width: 85px; }
.c-b { width: 107px; }
.c-c { width: 90px; }
.c-d { width: 101px; }
.c-e { width: 182px; }
.c-f { width: 119px; }
.c-g { width: 110px; }
.c-i { width: 88px; }
.c-j { width: 132px; }
.c-m { width: 117px; }
th, td { padding: 0; text-align: center; border: solid #c0c8dc; border-width: 0 1px 1px 0; overflow: hidden; white-space: nowrap; }
td { height: 46px; padding: 0 0 2px 1px; color: #000; font: 300 21px/30px "Noto Sans CJK SC", sans-serif; }
th { font-weight: 400; font-size: 14px; line-height: 16px; background: #f5f7fa; border-color: #a3aec6; }
tbody th { padding: 1px 5px 0 0; }
.letters th { height: 19px; padding-top: 2px; }
.letters .sel { background: #d2d5dd; color: #20b77f; border-right-color: #c8ccd6; }
.all { display: block; width: 0; height: 0; margin: 2px 0 0 14px; border: 5px solid transparent; border-right-color: #b5b7bc; border-bottom-color: #b5b7bc; }
.picked th { background: #d2d5dd; color: #20b77f; }
.picked td:nth-child(-n+13) { background: #d9d9d9; border-right-color: #a0abbc; }
.picked .cursor-cell.cursor-cell { background: #fff; }
.selection { position: absolute; left: 26px; top: 17px; width: 1332px; height: 49px; border: 3px solid #20b77f; box-shadow: inset 0 0 0 1px #fff; }
.handle { position: absolute; right: -5px; bottom: -5px; width: 7px; height: 7px; border: solid #fff; border-width: 1px 0 0 1px; background: #20b77f; }
.hidden-row { position: absolute; left: 0; top: 19px; }
.marks { position: absolute; left: 0; top: 0; }
.arrows { filter: drop-shadow(2px 2px 2px rgba(0, 0, 0, .6)); }

.vscroll { width: 14px; display: flex; flex-direction: column; flex: none; }
.split-grip { height: 3px; margin: 5px 0 6px 4px; border: solid #8793b3; border-width: 1px 0; }
.vtrack { flex: 1; display: flex; flex-direction: column; align-items: center; margin-left: 2px; background: #e9eaef; }
.up { margin: 8px 0 10px; border: 3px solid transparent; border-bottom: 4px solid #8793b3; border-top: 0; }
.vthumb { width: 11px; height: 94px; border-radius: 6px; background: #d2d5dd; }
.down { margin: auto 0 8px; border: 3px solid transparent; border-top: 4px solid #8793b3; border-bottom: 0; }

/* sheet tabs */
.sheetbar { display: flex; height: 22px; background: #f5f7fa; flex: none; }
.sheet-nav { display: flex; align-items: center; gap: 16px; width: 113px; padding-left: 9px; }
.sheet-nav svg { fill: none; stroke: #a3a9b8; }
.sheet-tab { height: 21px; padding: 2px 16px 0 17px; background: #e5e6eb; color: #4a5166; }
.sheet-tab.current { background: #fff; color: #20b77f; font-weight: 700; padding: 2px 16px 0 15px; }
.sheet-tab.blue { background: #bdd7ee; margin-right: 1px; padding: 2px 16px 0 18px; }
.sheet-tab.orange { background: #f4b083; padding: 2px 14px 0 17px; }
.sheet-tab.plain { padding: 2px 16px 0 19px; }
.add-sheet { width: 24px; }
.hscroll { display: flex; align-items: center; gap: 6px; width: 737px; margin-left: auto; padding-right: 16px; }
.grip { width: 3px; height: 10px; border: solid #7e879c; border-width: 0 1px; }
.htrack { display: flex; align-items: center; flex: 1; height: 14px; padding-left: 7px; gap: 10px; background: #e9eaef; }
.left { border: 3px solid transparent; border-right: 4px solid #7e89a8; border-left: 0; }
.hthumb { width: 115px; height: 12px; border-radius: 6px; background: #d2d5dd; }

/* status bar */
.status { display: flex; align-items: center; height: 24px; padding: 2px 0 0 10px; border-top: 1px solid #e1e3ea; flex: none; color: #1d2233; }
.status .vsep { height: 14px; }
.macro { margin-right: 14px; }
.payroll { display: flex; align-items: center; gap: 3px; margin: 0 15px 0 8px; }
.caret-up { margin-left: 6px; border: 3px solid transparent; border-bottom: 4px solid #6f7a94; border-top: 0; }
.status output { margin-right: 10px; }
.status-right { display: flex; align-items: center; margin-left: auto; padding-right: 14px; }
.status-right .split { width: 30px; height: 20px; margin: 0 9px 0 7px; }
.view { display: flex; align-items: center; justify-content: center; width: 24px; height: 22px; margin-right: 2px; }
.view.on { margin: 0 3px 0 10px; background: #dde1e8; }
.view:nth-of-type(5) { margin-right: 12px; }
.zoom-level { display: flex; align-items: center; gap: 5px; margin: 0 12px 0 7px; }
.zoom { width: 138px; height: 16px; margin: 0 12px; appearance: none; }
.zoom + .icon-btn { margin-right: 13px; }
.zoom::-webkit-slider-runnable-track { height: 1px; background: linear-gradient(90deg, #3b4358 50%, #c8ccd6 50%); }
.zoom::-webkit-slider-thumb { appearance: none; width: 12px; height: 12px; margin-top: -6px; border: 1px solid #3b4358; border-radius: 50%; background: #f5f5f7; }

/* floating input-method badge and site mark */
.ime { position: absolute; right: 385px; bottom: 19px; display: flex; align-items: center; justify-content: center; gap: 4px; width: 61px; height: 26px; border: 1px solid #777; border-radius: 5px; background: #fff; color: #333; box-shadow: 0 1px 3px rgba(0, 0, 0, .5); font-size: 13px; }
.watermark { position: absolute; right: 11px; bottom: 8px; display: flex; align-items: flex-start; opacity: .85; pointer-events: none; }
.watermark p { display: flex; flex-direction: column; }
.watermark b { color: #4f90d6; font: 500 21px/24px "Noto Sans CJK SC", sans-serif; }
.watermark span { color: #4dbb74; font: 17px/22px "Liberation Sans", sans-serif; }
```
